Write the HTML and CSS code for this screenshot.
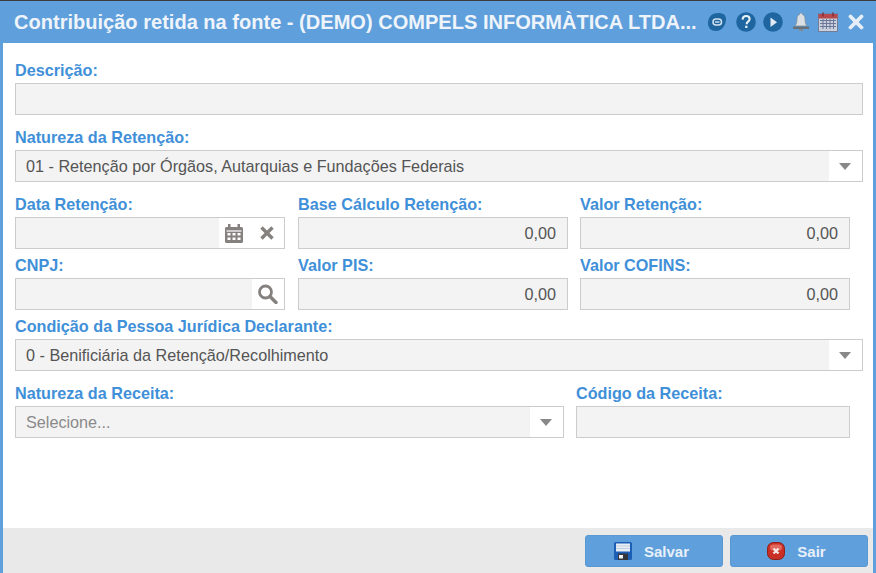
FILE: index.html
```html
<!DOCTYPE html>
<html lang="pt-BR">
<head>
<meta charset="utf-8">
<title>Contribuição retida na fonte</title>
<link rel="stylesheet" href="styles.css">
</head>
<body>
<div class="window">
  <header class="titlebar">
    <h1 class="title">Contribuição retida na fonte - (DEMO) COMPELS INFORMÀTICA LTDA...</h1>
    <div class="tools">
      <svg class="tool t-chat" viewBox="0 0 18 18" width="18" height="18"><path d="M10 0c5 0 8 2 8 6 0 6-4 12-10 12-5 0-8-3-8-8C0 4 4 0 10 0z" fill="#1f659f"/><rect x="5" y="6" width="8.500" height="6" rx="3" fill="none" stroke="#d4e4f2" stroke-width="1.500"/><path d="M7 9h4.500" stroke="#d4e4f2" stroke-width="1.400"/></svg>
      <svg class="tool t-help" viewBox="0 0 20 20" width="20" height="20"><circle cx="10" cy="10" r="9.800" fill="#1f659f"/><path d="M6.600 7.600C6.700 5.300 8.200 4 10.200 4c2 0 3.400 1.200 3.400 3 0 1.500-.9 2.200-1.800 2.900-.8.600-1.100 1-1.100 2v.4" fill="none" stroke="#e9f1f8" stroke-width="2.100"/><rect x="9.200" y="13.700" width="2.200" height="2.300" fill="#e9f1f8"/></svg>
      <svg class="tool t-play" viewBox="0 0 20 20" width="20" height="20"><circle cx="10" cy="10" r="9.800" fill="#1f659f"/><path d="M7.500 5.500v9.500l6.500-4.700z" fill="#dfeaf4"/></svg>
      <svg class="tool t-bell" viewBox="0 0 16 18" width="16" height="18"><path d="M8 0c1 0 1.500.7 1.500 1.500C11.500 2.200 12 4 12 6c0 3 .7 5.500 2 7H2c1.300-1.500 2-4 2-7 0-2 .5-3.800 2.500-4.500C6.500.7 7 0 8 0z" fill="#d9dfe4" stroke="#7d8a94" stroke-width=".700"/><path d="M0 13.500h16v2.500H0z" fill="#67717a"/><path d="M6 16h4v2H6z" fill="#7d8a94"/></svg>
      <svg class="tool t-cal" viewBox="0 0 20 20" width="20" height="20"><rect x="0.500" y="2" width="19" height="17.500" fill="#c9cfdb" stroke="#68708a" stroke-width=".800"/><rect x="0.500" y="2" width="19" height="4.500" fill="#b84a4f"/><path d="M5 .5v4M15 .5v4" stroke="#7a3034" stroke-width="1.400"/><path d="M2 8.500h16M2 11.500h16M2 14.500h16M5 7v10M8.500 7v10M12 7v10M15.500 7v10" stroke="#6d7799" stroke-width="1"/></svg>
      <svg class="tool t-close" viewBox="0 0 16 16" width="16" height="16"><path d="M2.500 2.500l11 11M13.500 2.500l-11 11" stroke="#e6eff8" stroke-width="3.800" stroke-linecap="round"/></svg>
    </div>
  </header>

  <main class="form">
    <div class="field gap-l">
      <label class="label">Descrição:</label>
      <div class="box w-full"></div>
    </div>
    <div class="field gap-l">
      <label class="label">Natureza da Retenção:</label>
      <div class="box w-full"><span class="value">01 - Retenção por Órgãos, Autarquias e Fundações Federais</span><span class="addon addon-select"><i class="caret"></i></span></div>
    </div>
    <div class="row gap-s">
      <div class="field w-third">
        <label class="label">Data Retenção:</label>
        <div class="box">
          <span class="value"></span>
          <span class="addon addon-date">
            <svg viewBox="0 0 18 20" width="18" height="20"><path d="M0 5.500a1.500 1.500 0 0 1 1.500-1.500H3V1h2.500v3h7V1H15v3h1.500A1.500 1.500 0 0 1 18 5.500V18.500a1.500 1.500 0 0 1-1.500 1.500h-15A1.500 1.500 0 0 1 0 18.500z" fill="#85817f"/><path d="M1.500 8h15" stroke="#fff" stroke-width="1.200"/><g fill="#fff"><rect x="2.500" y="10" width="3" height="2.500"/><rect x="7.500" y="10" width="3" height="2.500"/><rect x="12.500" y="10" width="3" height="2.500"/><rect x="2.500" y="14.500" width="3" height="2.500"/><rect x="7.500" y="14.500" width="3" height="2.500"/><rect x="12.500" y="14.500" width="3" height="2.500"/></g></svg>
            <svg viewBox="0 0 14 14" width="14" height="14"><path d="M1.500 1.500l11 11M12.500 1.500l-11 11" stroke="#85817f" stroke-width="3.400"/></svg>
          </span>
        </div>
      </div>
      <div class="field w-third">
        <label class="label">Base Cálculo Retenção:</label>
        <div class="box num">0,00</div>
      </div>
      <div class="field w-third">
        <label class="label">Valor Retenção:</label>
        <div class="box num">0,00</div>
      </div>
    </div>
    <div class="row gap-s">
      <div class="field w-third">
        <label class="label">CNPJ:</label>
        <div class="box">
          <span class="value"></span>
          <span class="addon addon-search">
            <svg viewBox="0 0 20 20" width="21" height="20"><circle cx="8" cy="8" r="6" fill="none" stroke="#85817f" stroke-width="2.800"/><path d="M12.500 12.500l6 6" stroke="#85817f" stroke-width="3.400" stroke-linecap="round"/></svg>
          </span>
        </div>
      </div>
      <div class="field w-third">
        <label class="label">Valor PIS:</label>
        <div class="box num">0,00</div>
      </div>
      <div class="field w-third">
        <label class="label">Valor COFINS:</label>
        <div class="box num">0,00</div>
      </div>
    </div>
    <div class="field gap-l">
      <label class="label">Condição da Pessoa Jurídica Declarante:</label>
      <div class="box w-full"><span class="value">0 - Benificiária da Retenção/Recolhimento</span><span class="addon addon-select"><i class="caret"></i></span></div>
    </div>
    <div class="row">
      <div class="field w-nature">
        <label class="label">Natureza da Receita:</label>
        <div class="box"><span class="value placeholder">Selecione...</span><span class="addon addon-select"><i class="caret"></i></span></div>
      </div>
      <div class="field w-code">
        <label class="label">Código da Receita:</label>
        <div class="box"></div>
      </div>
    </div>
  </main>

  <footer class="footer">
    <button class="btn" type="button">
      <svg viewBox="0 0 18 18" width="18" height="18"><path d="M0 1.500A1.500 1.500 0 0 1 1.500 0h15A1.500 1.500 0 0 1 18 1.500v15a1.500 1.500 0 0 1-1.500 1.500h-15A1.500 1.500 0 0 1 0 16.500z" fill="#1c5fb4"/><rect x="2" y="1.500" width="14" height="8" fill="#e8eef5"/><path d="M2 4h14M2 6.500h14" stroke="#b9c7d6" stroke-width=".800"/><rect x="4" y="11.500" width="10" height="6.500" fill="#33363b"/><rect x="5" y="13" width="4" height="3.500" fill="#eef2f6"/></svg>
      <span>Salvar</span>
    </button>
    <button class="btn" type="button">
      <svg viewBox="0 0 18 18" width="18" height="18"><rect x="0.500" y="0.500" width="17" height="17" rx="6" fill="#c92f25" stroke="#8e2018"/><rect x="3" y="2.500" width="12" height="6" rx="3" fill="#e2675e"/><path d="M6.500 6.500l5 5M11.500 6.500l-5 5" stroke="#f6e3e1" stroke-width="2.400"/></svg>
      <span>Sair</span>
    </button>
  </footer>
</div>
</body>
</html>
```
FILE: styles.css
```css
* { box-sizing: border-box; }
html, body { margin: 0; padding: 0; height: 100%; overflow: hidden; }
body { background: #3c3c3c; font-family: "Liberation Sans", Arial, sans-serif; padding-top: 1px; }

.window {
  height: 572px;
  display: flex;
  flex-direction: column;
  background: #fff;
  border-left: 3px solid #5e9fdc;
  border-right: 3px solid #5e9fdc;
}

.titlebar {
  height: 42px;
  flex: none;
  display: flex;
  align-items: center;
  background: #5e9fdc;
  padding: 0 11px;
}
.title {
  margin: 0;
  width: 686px;
  flex: none;
  font-size: 20.060px;
  font-weight: 700;
  color: #eef4fa;
  white-space: nowrap;
}
.tools { display: flex; align-items: center; margin-left: 8px; }
.tool { display: block; flex: none; }
.t-help { margin-left: 10px; }
.t-play { margin-left: 7px; }
.t-bell { margin-left: 10px; }
.t-cal { margin-left: 9px; }
.t-close { margin-left: 10px; }

.form { flex: 1; padding: 20px 13px 0 12px; }
.row { display: flex; }
.gap-s { margin-bottom: 9px; }
.gap-l { margin-bottom: 15px; }
.row .field + .field { margin-left: 13px; }
.row .field + .field + .field { margin-left: 12px; }
.w-third { width: 270px; }
.w-nature { width: 549px; }
.row .field.w-code { width: 274px; margin-left: 12px; }

.label {
  display: block;
  height: 20px;
  line-height: 15px;
  font-size: 16.200px;
  font-weight: 700;
  color: #3f90d8;
}
.box {
  display: flex;
  align-items: center;
  height: 32px;
  background: #f3f3f3;
  border: 1px solid #cccccc;
  font-size: 16.200px;
  color: #555;
}
.w-full { width: 848px; }
.value { flex: 1; padding-left: 10px; white-space: nowrap; }
.placeholder { color: #8a8a8a; }
.num { justify-content: flex-end; padding-right: 11px; }

.addon {
  flex: none;
  height: 100%;
  background: #fff;
  display: flex;
  align-items: center;
}
.addon-select { width: 33px; justify-content: center; padding-right: 1px; }
.addon-date { width: 65px; padding-left: 6px; gap: 17px; }
.addon-search { width: 32px; padding-left: 5px; }
.caret {
  display: block;
  width: 0;
  height: 0;
  border-left: 6px solid transparent;
  border-right: 6px solid transparent;
  border-top: 7px solid #888;
}

.footer {
  height: 45px;
  flex: none;
  display: flex;
  justify-content: flex-end;
  gap: 7px;
  padding: 7px 5px 0 0;
  background: #e9e9e9;
}
.btn {
  width: 138px;
  height: 32px;
  display: flex;
  align-items: center;
  justify-content: center;
  gap: 12px;
  padding: 0 5px 0 0;
  background: #5e9fdc;
  border: 1px solid #5a98d2;
  border-radius: 3px;
  font: 700 15px "Liberation Sans", Arial, sans-serif;
  color: #e8f0f8;
}
```
